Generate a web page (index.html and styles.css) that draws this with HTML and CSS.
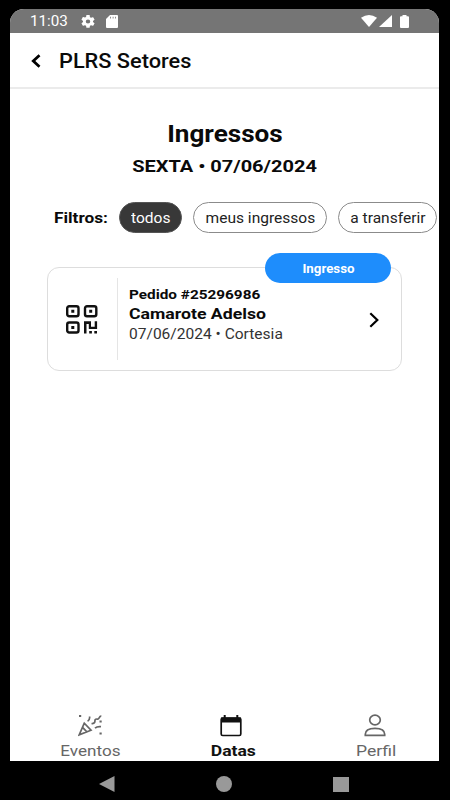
FILE: index.html
```
<!DOCTYPE html>
<html lang="pt-BR">
<head>
<meta charset="utf-8">
<title>PLRS Setores</title>
<link rel="stylesheet" href="styles.css">
</head>
<body>
<div class="screen">
  <div class="status">
    <span class="clock">11:03</span>
    <svg class="gear" viewBox="2 2 20 20" preserveAspectRatio="none"><path d="M19.14 12.94c.04-.3.06-.61.06-.94s-.02-.64-.07-.94l2.03-1.58a.49.49 0 0 0 .12-.61l-1.92-3.32a.49.49 0 0 0-.59-.22l-2.39.96a7 7 0 0 0-1.62-.94l-.36-2.54A.48.48 0 0 0 13.92 2h-3.84a.48.48 0 0 0-.47.41l-.36 2.54c-.59.24-1.13.57-1.62.94l-2.39-.96a.48.48 0 0 0-.59.22L2.74 8.87a.48.48 0 0 0 .12.61l2.03 1.58a7 7 0 0 0 0 1.88l-2.03 1.58a.49.49 0 0 0-.12.61l1.92 3.32c.12.22.37.29.59.22l2.39-.96c.5.38 1.03.7 1.62.94l.36 2.54c.05.24.24.41.48.41h3.84c.24 0 .44-.17.47-.41l.36-2.54a7 7 0 0 0 1.62-.94l2.39.96c.22.08.47 0 .59-.22l1.92-3.32a.48.48 0 0 0-.12-.61zM12 15.2a3.2 3.2 0 1 1 0-6.400 3.200 3.200 0 0 1 0 6.400z"/></svg>
    <svg class="sd" viewBox="0 0 12 13" preserveAspectRatio="none"><path fill-rule="evenodd" d="M4 0h7q1 0 1 1v11q0 1-1 1H1q-1 0-1-1V4zM4.200 1.800v1.700h.8V1.800zm2.500 0v1.700h.8V1.800zm2.500 0v1.700h.8V1.800z"/></svg>
    <span class="grow"></span>
    <svg class="wifi" viewBox="0 0 16 12" preserveAspectRatio="none"><path d="M0 2.800Q8-2.600 16 2.800L8 12z"/></svg>
    <svg class="signal" viewBox="0 0 13 12" preserveAspectRatio="none"><path d="M13 0v12H0z"/></svg>
    <svg class="battery" viewBox="0 0 9 13" preserveAspectRatio="none"><path d="M2.500 0h4v1.200H8q1 0 1 1V12q0 1-1 1H1q-1 0-1-1V2.200q0-1 1-1h1.500z"/></svg>
  </div>
  <header class="header">
    <svg class="back" viewBox="0 0 10 14"><path d="M8.500 1.300 2.300 7l6.200 5.700"/></svg>
    <h1 class="title">PLRS Setores</h1>
  </header>
  <main class="main">
    <h2 class="heading"><span>Ingressos</span></h2>
    <p class="date"><span>SEXTA • 07/06/2024</span></p>
    <div class="filters">
      <span class="filter-label">Filtros:</span>
      <div class="chip chip-on"><span>todos</span></div>
      <div class="chip chip-meus"><span>meus ingressos</span></div>
      <div class="chip chip-transf"><span>a transferir</span></div>
    </div>
    <article class="card">
      <div class="badge"><span>Ingresso</span></div>
      <svg class="qr" viewBox="0 0 32 29">
        <g class="qr-box"><rect x="1.200" y="1.200" width="11.300" height="10" rx="2"/><rect x="19" y="1.200" width="11.300" height="10" rx="2"/><rect x="1.200" y="17.500" width="11.300" height="10" rx="2"/></g>
        <path d="M5.300 4.800h3v3h-3zM23.200 4.800h3v3h-3zM5.300 21h3v3h-3zM18 16.300h7v5.500h3.700v-5.500h2.400v7.800h-8.300v-5.200h-2.300v9.600H18zM23.200 26h2.700v2.500h-2.700zM28.300 26H31v2.500h-2.700z"/>
      </svg>
      <div class="info">
        <span class="order">Pedido #25296986</span>
        <span class="sector">Camarote Adelso</span>
        <span class="meta">07/06/2024 • Cortesia</span>
      </div>
      <svg class="next" viewBox="0 0 10 16"><path d="M1.300 1.300 8.300 8l-7 6.700"/></svg>
    </article>
  </main>
  <nav class="tabs">
    <div class="tab">
      <svg class="ico" viewBox="0 0 24 23"><path d="M6.300 9.200 1.200 20.800 13 16.200zM4.800 13.700l3.800 4M9.600 7.200c2-1 2.200-3 2-4.700M13.500 9.500c2 .3 3.600-.8 3.400-2.700-.1-1.600 1.500-2 2.700-1.700 1.700.3 1.400-3.300 3.700-3M17 14.200c1.500-1.400 3.600-1.800 6-1.500"/><path class="dots" d="M1 1h2.200v2H1zM21.500 6.500h2.200v2h-2.200zM21.500 18.500h2.200v2h-2.200z"/></svg>
      <span>Eventos</span>
    </div>
    <div class="tab tab-on">
      <svg class="ico" viewBox="0 0 24 23"><rect x="2.200" y="4" width="19.600" height="17.500" rx="1.500"/><path class="dots" d="M2 3.500h20v5H2zM4.700 1h2v3h-2zM17.300 1h2v3h-2z"/></svg>
      <span>Datas</span>
    </div>
    <div class="tab tab-profile">
      <svg class="ico" viewBox="0 0 24 23"><ellipse cx="12" cy="6" rx="5.300" ry="4.900"/><path d="M2.300 21.300v-1c0-4 4-6 9.700-6s9.700 2 9.700 6v1z"/></svg>
      <span>Perfil</span>
    </div>
  </nav>
</div>
<div class="system">
  <svg viewBox="0 0 16 16" class="sys-back"><path d="M0 8 15.500 0v16z"/></svg>
  <svg viewBox="0 0 16 16" class="sys-home"><circle cx="8" cy="8" r="8"/></svg>
  <svg viewBox="0 0 16 15" class="sys-recent"><path d="M0 0h16v15H0z"/></svg>
</div>
</body>
</html>
```
FILE: styles.css
```
* { box-sizing: border-box; margin: 0; padding: 0; }
html, body { width: 450px; height: 800px; overflow: hidden; }
body { background: #000; font-family: Roboto, "Liberation Sans", sans-serif; color: #0a0a0a; padding: 9px 11px 0 10px; }
svg { display: block; flex: none; }
span, h1 { white-space: nowrap; }
.screen { height: 752px; background: #fff; border-radius: 14px 14px 0 0; overflow: hidden; display: flex; flex-direction: column; }
.status { height: 24px; background: #757575; color: #fff; fill: #fff; display: flex; align-items: center; padding: 0 30px 0 20px; }
.clock { width: 51px; font-size: 14.500px; transform: scaleX(1.050); transform-origin: left; }
.gear { width: 14px; height: 13px; }
.sd { width: 12px; height: 13px; margin-left: 11px; }
.grow { flex: 1; }
.wifi { width: 16px; height: 12px; }
.signal { width: 13px; height: 12px; margin-left: 2px; }
.battery { width: 9px; height: 13px; margin-left: 8px; }
.header { height: 56px; flex: none; display: flex; align-items: center; padding: 1px 0 0 21px; border-bottom: 2px solid #ebebeb; }
.back { width: 10px; height: 14px; fill: none; stroke: #000; stroke-width: 2.800; }
.title { font-size: 19.500px; font-weight: 500; margin: 2px 0 0 18px; transform: scaleX(1.115); transform-origin: left; }
.main { flex: 1; padding-top: 31px; }
.heading, .date { display: flex; justify-content: center; }
.heading { font-size: 23px; line-height: 30px; font-weight: 700; }
.heading span { transform: scaleX(1.135); }
.date { font-size: 17px; line-height: 22px; margin-top: 5px; font-weight: 700; }
.date span { transform: scaleX(1.175); }
.filters { height: 31px; margin-top: 25px; padding-left: 44px; display: flex; align-items: center; }
.filter-label { width: 65px; font-size: 15px; font-weight: 700; transform: scaleX(1.150); transform-origin: left; }
.chip { height: 31px; border: 1px solid #8b8b8b; border-radius: 16px; display: flex; align-items: center; justify-content: center; font-size: 14px; flex: none; color: #222; }
.chip span { transform: scaleX(1.110); }
.chip-on { width: 63px; background: #383838; border-color: #555; color: #fff; }
.chip-meus { width: 134px; margin-left: 11px; }
.chip-transf { width: 99px; margin-left: 11px; }
.card { position: relative; width: 355px; height: 104px; margin: 34px 0 0 37px; border: 1px solid #ddd; border-radius: 12px; display: flex; align-items: center; }
.badge { position: absolute; left: 217px; top: -15px; width: 126px; height: 30px; border-radius: 15px; background: #1e8dfc; color: #fff; display: flex; align-items: center; justify-content: center; font-size: 12px; font-weight: 700; padding-top: 1px; }
.badge span { transform: scaleX(1.110); }
.qr { width: 32px; height: 29px; margin-left: 18px; fill: #111; }
.qr-box { fill: none; stroke: #111; stroke-width: 2.400; }
.info { margin-left: 19px; border-left: 1px solid #e5e5e5; height: 82px; width: 240px; padding: 6px 0 0 11px; display: flex; flex-direction: column; align-items: flex-start; }
.info span { transform-origin: left; line-height: 20px; }
.order { font-size: 13.500px; font-weight: 700; transform: scaleX(1.135); }
.sector { font-size: 15.500px; font-weight: 700; transform: scaleX(1.140); }
.meta { font-size: 14px; color: #333; transform: scaleX(1.110); }
.next { width: 10px; height: 16px; margin: 2px 0 0 12px; fill: none; stroke: #000; stroke-width: 2.200; }
.tabs { height: 50px; flex: none; display: flex; justify-content: space-between; padding: 3px 32px 0 49px; color: #666; }
.tab { width: 62px; display: flex; flex-direction: column; align-items: center; font-size: 15px; line-height: 19px; }
.tab span { transform: scaleX(1.140); }
.ico { width: 24px; height: 23px; margin-bottom: 5px; fill: none; stroke: currentColor; stroke-width: 1.700; }
.ico .dots { fill: currentColor; stroke: none; }
.tab-on { color: #111; font-weight: 700; }
.tab-on .ico { margin-right: 4px; }
.tab-on span, .tab-profile span { transform: scaleX(1.170); }
.tab-profile .ico { margin-right: 3px; }
.system { height: 39px; display: flex; align-items: center; padding: 7px 0 0 89px; fill: #999; }
.sys-back { width: 16px; height: 16px; }
.sys-home { width: 16px; height: 16px; margin-left: 101px; }
.sys-recent { width: 16px; height: 15px; margin-left: 101px; }
```
